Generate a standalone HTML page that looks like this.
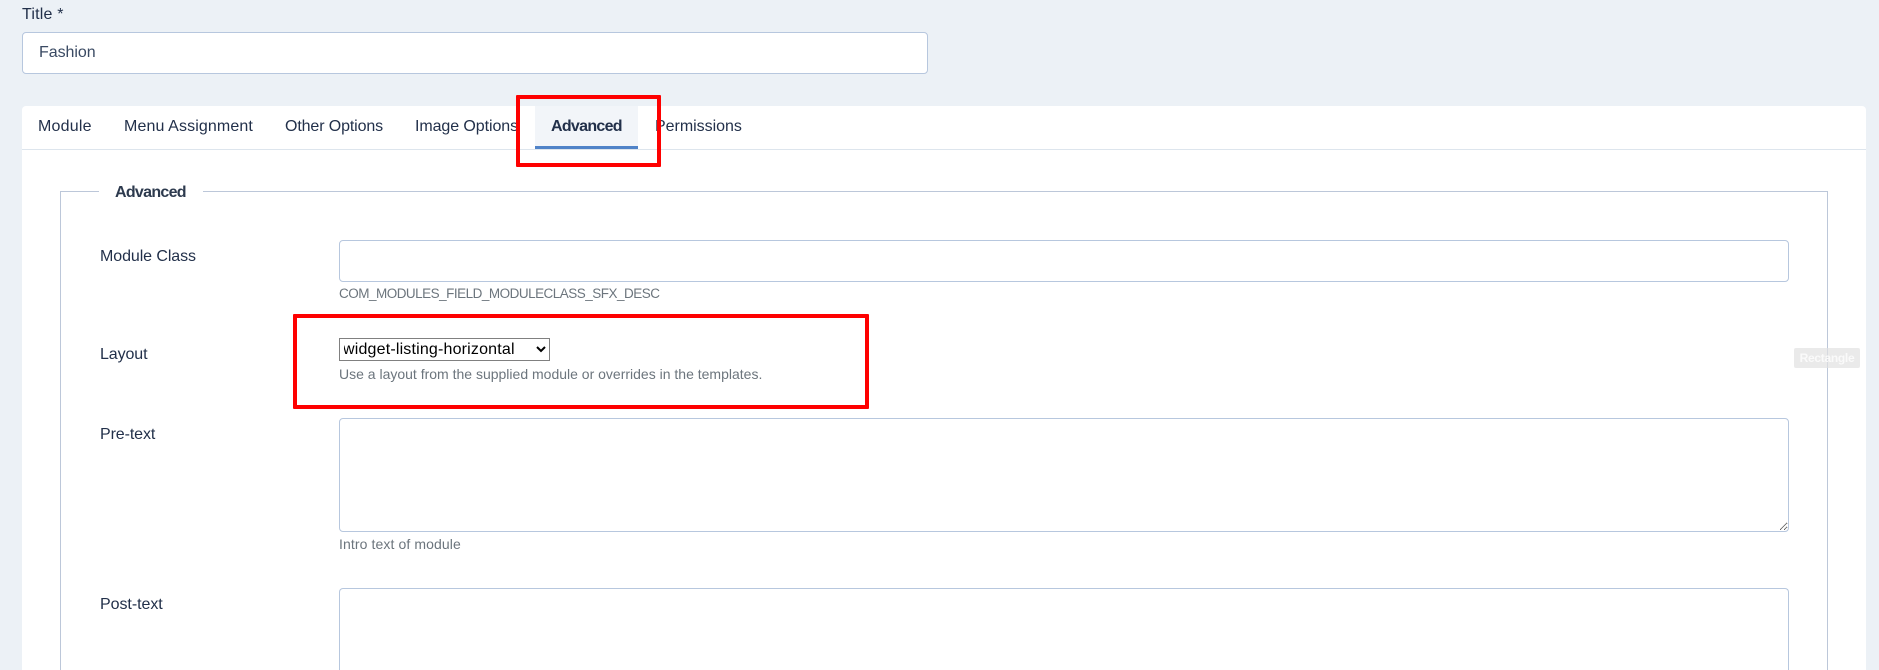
<!DOCTYPE html>
<html lang="en">
<head>
<meta charset="utf-8">
<title>Module - Advanced</title>
<style>
html,body{margin:0;padding:0;width:1879px;height:670px;overflow:hidden;background:#ecf1f6;}
body{position:relative;font-family:"Liberation Sans",sans-serif;color:#22304a;font-size:16px;}
.t{position:absolute;white-space:nowrap;line-height:20px;height:20px;letter-spacing:.2px;}
.help{color:#6c757d;font-size:14px;letter-spacing:0;}
.box{position:absolute;box-sizing:border-box;background:#fff;border:1px solid #b7c7de;border-radius:4px;}
.panel{position:absolute;left:22px;top:106px;width:1844px;height:564px;background:#fff;border-radius:4px 4px 0 0;}
.tabline{position:absolute;left:22px;top:149px;width:1844px;height:1px;background:#dde5ed;}
.active{position:absolute;left:535px;top:106px;width:103px;height:43px;box-sizing:border-box;background:#f2f5f9;border-bottom:3px solid #5083c8;}
.fs{position:absolute;left:60px;top:191px;width:1768px;height:479px;box-sizing:border-box;border:1px solid #bcc7d9;border-bottom:none;}
.gap{position:absolute;left:99px;top:185px;width:104px;height:12px;background:#fff;}
.red{position:absolute;box-sizing:border-box;border:4px solid #fe0000;border-radius:1px;}
select{position:absolute;left:339px;top:338px;width:211px;height:23px;box-sizing:border-box;font-family:"Liberation Sans",sans-serif;font-size:16px;letter-spacing:.18px;text-indent:-1px;color:#000;background:#fff;border:1px solid #808080;border-radius:0;padding:0;margin:0;}
textarea{position:absolute;box-sizing:border-box;background:#fff;border:1px solid #b7c7de;border-radius:4px;margin:0;padding:0;outline:none;}
.badge{position:absolute;left:1794px;top:348px;width:66px;height:20px;background:rgba(225,225,225,.7);border-radius:2px;color:#fafafa;font-size:12px;font-weight:bold;line-height:20px;text-align:center;letter-spacing:-.3px;}
</style>
</head>
<body>
<div class="t" style="left:22px;top:5px;">Title *</div>
<div class="box" style="left:22px;top:32px;width:906px;height:42px;"></div>
<div class="t" style="left:39px;top:43px;color:#3a4a63;letter-spacing:-.05px;">Fashion</div>

<div class="panel"></div>
<div class="tabline"></div>
<div class="active"></div>
<div class="t" style="left:38px;top:117px;">Module</div>
<div class="t" style="left:124px;top:117px;letter-spacing:.12px;">Menu Assignment</div>
<div class="t" style="left:285px;top:117px;letter-spacing:-.12px;">Other Options</div>
<div class="t" style="left:415px;top:117px;letter-spacing:-.08px;">Image Options</div>
<div class="t" style="left:551px;top:117px;font-weight:bold;letter-spacing:-.7px;">Advanced</div>
<div class="t" style="left:655px;top:117px;letter-spacing:-.02px;">Permissions</div>

<div class="fs"></div>
<div class="gap"></div>
<div class="t" style="left:115px;top:181px;margin-top:2px;font-weight:bold;letter-spacing:-.7px;color:#2d3a4e;">Advanced</div>

<div class="t" style="left:100px;top:247px;letter-spacing:-.08px;">Module Class</div>
<div class="box" style="left:339px;top:240px;width:1450px;height:42px;"></div>
<div class="t help" style="left:339px;top:284px;font-size:13.5px;letter-spacing:-.51px;">COM_MODULES_FIELD_MODULECLASS_SFX_DESC</div>

<div class="t" style="left:100px;top:345px;letter-spacing:-.1px;">Layout</div>
<select><option>widget-listing-horizontal</option></select>
<div class="t help" style="left:339px;top:364px;">Use a layout from the supplied module or overrides in the templates.</div>

<div class="t" style="left:100px;top:425px;letter-spacing:-.1px;">Pre-text</div>
<textarea style="left:339px;top:418px;width:1450px;height:114px;"></textarea>
<div class="t help" style="left:339px;top:534px;letter-spacing:.1px;">Intro text of module</div>

<div class="t" style="left:100px;top:595px;letter-spacing:-.05px;">Post-text</div>
<div class="box" style="left:339px;top:588px;width:1450px;height:82px;border-bottom:none;border-radius:4px 4px 0 0;"></div>

<div class="badge">Rectangle</div>

<div class="red" style="left:516px;top:95px;width:145px;height:72px;"></div>
<div class="red" style="left:293px;top:314px;width:576px;height:95px;"></div>
</body>
</html>
